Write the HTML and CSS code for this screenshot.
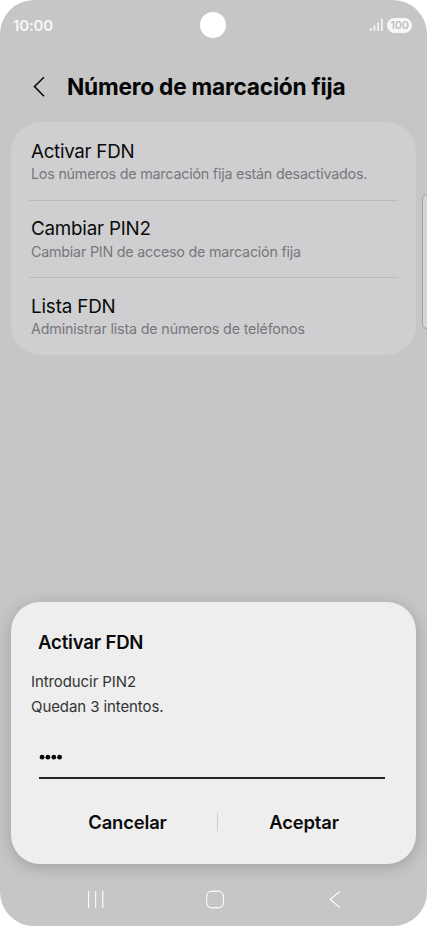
FILE: index.html
```html
<!DOCTYPE html>
<html lang="es">
<head>
<meta charset="utf-8">
<title>Número de marcación fija</title>
<link rel="stylesheet" href="styles.css">
</head>
<body>
<main class="phone">
  <header class="status">
    <span class="clock">10:00</span>
    <span class="camera"></span>
    <span class="indicators">
      <svg class="signal" width="13" height="14" viewBox="0 0 13 14"><path d="M.8 10.2V13M4.5 7.5V13M8.2 4.2V13M11.9 .7V13" stroke="#f7f7f7" stroke-width="1.6" fill="none"/></svg>
      <span class="battery">100</span>
    </span>
  </header>
  <div class="heading">
    <svg width="13" height="22" viewBox="0 0 13 22"><path d="M11 1.2L1.5 10.5L11 20.2" fill="none" stroke="#080808" stroke-width="1.6"/></svg>
    <h1>Número de marcación fija</h1>
  </div>
  <section class="card">
    <div class="item"><h2 class="t1">Activar FDN</h2><p class="s1">Los números de marcación fija están desactivados.</p></div>
    <div class="item"><h2 class="t2">Cambiar PIN2</h2><p class="s2">Cambiar PIN de acceso de marcación fija</p></div>
    <div class="item"><h2 class="t3">Lista FDN</h2><p class="s3">Administrar lista de números de teléfonos</p></div>
  </section>
  <span class="edge"></span>
  <section class="dialog">
    <h2>Activar FDN</h2>
    <p class="m1">Introducir PIN2</p>
    <p class="m2">Quedan 3 intentos.</p>
    <div class="field"><svg width="24" height="6" viewBox="0 0 24 6"><g fill="#080808"><circle cx="3.1" cy="3.2" r="2.4"/><circle cx="8.9" cy="3.2" r="2.4"/><circle cx="14.8" cy="3.2" r="2.4"/><circle cx="20.6" cy="3.2" r="2.4"/></g></svg></div>
    <div class="actions"><span class="btn cancel">Cancelar</span><span class="split"></span><span class="btn accept">Aceptar</span></div>
  </section>
  <nav class="nav">
    <svg width="20" height="20" viewBox="0 0 20 20"><path d="M3.7 1V18M10.7 1V18M17.8 1V18"/></svg>
    <svg width="20" height="20" viewBox="0 0 20 20"><rect x="1.7" y="1.2" width="16.6" height="16.6" rx="5"/></svg>
    <svg width="20" height="20" viewBox="0 0 20 20"><path d="M15.2 1.1L5.2 9.5L15.2 17.9"/></svg>
  </nav>
</main>
</body>
</html>
```
FILE: styles.css
```css
* { box-sizing: border-box; margin: 0; padding: 0; }
body { background: #fff; font-family: Inter, "Liberation Sans", sans-serif; color: #0a0a0a; }
svg { display: block; flex: none; }
h1, h2, p, span { white-space: nowrap; }
.phone { position: relative; width: 427px; height: 926px; overflow: hidden; border-radius: 34px; background: #c6c6c6; display: flex; flex-direction: column; }
.status { height: 50px; flex: none; display: grid; grid-template-columns: 1fr 26px 1fr; align-items: center; padding: 0 15px 0 13px; }
.clock { font-size: 15px; font-weight: 600; color: #f7f7f7; line-height: 20px; letter-spacing: -.15px; padding-top: 1px; }
.camera { width: 26px; height: 26px; border-radius: 50%; background: #fff; }
.indicators { display: flex; justify-content: flex-end; align-items: center; gap: 4px; }
.battery { width: 25px; height: 15px; border-radius: 8px; background: #f7f7f7; color: #c2c2c2; font-size: 11px; font-weight: 600; line-height: 15px; letter-spacing: -.3px; text-align: center; }
.heading { height: 72px; flex: none; display: flex; align-items: center; padding: 1px 0 0 33px; gap: 21px; }
.heading h1 { font-size: 22.7px; line-height: 30px; font-weight: 700; letter-spacing: -.22px; color: #050505; }
.card { margin: 0 11px; height: 232.5px; flex: none; border-radius: 30px; background: #cfcfd1; padding: 0 18px; }
.item { height: 77.5px; padding: 18px 0 0 2px; }
.item + .item { padding-top: 16px; border-top: 1px solid #bbbbbd; }
.item:last-child { padding-top: 17px; }
.item h2 { font-size: 18.8px; line-height: 24px; font-weight: 400; }
.item p { font-size: 14.3px; line-height: 20px; margin-top: 1px; color: #77777a; }
.item .t1 { letter-spacing: -.3px; }
.item .t2 { letter-spacing: -.22px; }
.item .t3 { letter-spacing: -.15px; }
.item .s1 { letter-spacing: -.21px; margin-top: 0; }
.item .s2 { letter-spacing: -.22px; }
.item .s3 { letter-spacing: -.17px; margin-top: 0; }
.edge { position: absolute; left: 422px; top: 194px; width: 10px; height: 135px; border: 1px solid #a0a0a0; border-radius: 5px; background: #d4d4d4; }
.dialog { margin: 247.5px 11px 0; height: 262px; flex: none; border-radius: 29px; background: #eee; box-shadow: 0 3px 16px rgba(0, 0, 0, .2); padding: 27px 20px 0; }
.dialog h2 { font-size: 18.6px; line-height: 26px; font-weight: 600; margin: 0 0 14px 7px; letter-spacing: -.2px; }
.dialog p { font-size: 15px; line-height: 25px; color: #343434; letter-spacing: -.09px; }
.field { width: 346px; height: 25px; margin: 35px 0 0 8px; border-bottom: 2px solid #292629; }
.actions { display: flex; align-items: center; justify-content: center; margin-top: 29px; height: 28px; }
.btn { font-size: 18.4px; line-height: 26px; font-weight: 600; text-align: center; letter-spacing: -.15px; }
.cancel { width: 180px; padding-left: 1px; }
.accept { width: 172px; }
.split { width: 1px; height: 18px; background: #ccc; }
.nav { height: 62px; padding: 9px 0 0 3px; display: flex; align-items: center; justify-content: center; gap: 100px; }
.nav svg { fill: none; stroke: #f7f7f7; stroke-width: 1.8; filter: drop-shadow(0 0 .5px #777); }
```
